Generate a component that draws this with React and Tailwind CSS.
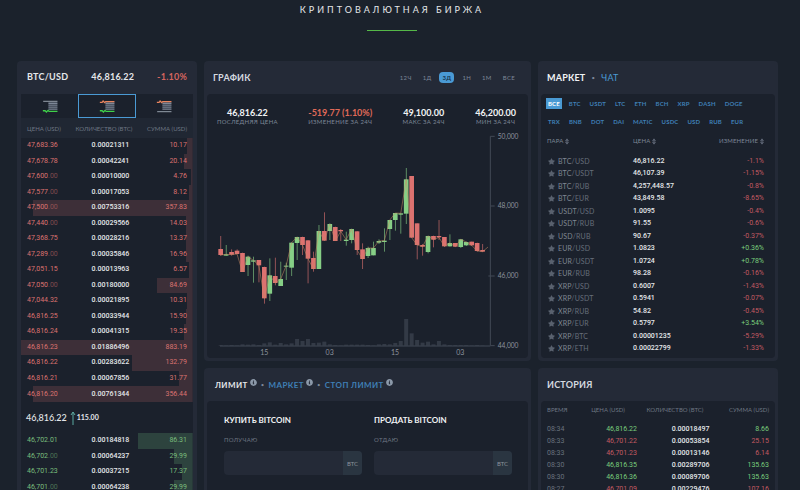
import React, { useState } from 'react';
import { FaStar, FaInfoCircle } from 'react-icons/fa';

const asks = [
    ['47,683', '.36', '0.00021311', '10.17', 3],
    ['47,678', '.78', '0.00042241', '20.14', 5],
    ['47,600', '.00', '0.00010000', '4.76', 1],
    ['47,577', '.00', '0.00017053', '8.12', 2],
    ['47,500', '.00', '0.00753316', '357.83', 93],
    ['47,440', '.00', '0.00029566', '14.03', 4],
    ['47,368', '.75', '0.00028216', '13.37', 4],
    ['47,289', '.00', '0.00035846', '16.96', 4],
    ['47,051', '.15', '0.00013963', '6.57', 2],
    ['47,050', '.00', '0.00180000', '84.69', 21],
    ['47,044', '.32', '0.00021895', '10.31', 3],
    ['46,816', '.25', '0.00033944', '15.90', 4],
    ['46,816', '.24', '0.00041315', '19.35', 5],
    ['46,816', '.23', '0.01886496', '883.19', 100],
    ['46,816', '.22', '0.00283622', '132.79', 35],
    ['46,816', '.21', '0.00067856', '31.77', 8],
    ['46,816', '.20', '0.00761344', '356.44', 93],
];

const bids = [
    ['46,702', '.01', '0.00184818', '86.31', 32],
    ['46,702', '.00', '0.00064237', '29.99', 11],
    ['46,701', '.23', '0.00037215', '17.37', 6],
    ['46,701', '.00', '0.00064238', '29.99', 11],
];

const coins = [
    ['ВСЕ', 'BTC', 'USDT', 'LTC', 'ETH', 'BCH', 'XRP', 'DASH', 'DOGE'],
    ['TRX', 'BNB', 'DOT', 'DAI', 'MATIC', 'USDC', 'USD', 'RUB', 'EUR'],
];

const pairs = [
    ['BTC', 'USD', '46,816.22', '-1.1%'],
    ['BTC', 'USDT', '46,107.39', '-1.15%'],
    ['BTC', 'RUB', '4,257,448.57', '-0.8%'],
    ['BTC', 'EUR', '43,849.58', '-8.65%'],
    ['USDT', 'USD', '1.0095', '-0.4%'],
    ['USDT', 'RUB', '91.55', '-0.6%'],
    ['USD', 'RUB', '90.67', '-0.37%'],
    ['EUR', 'USD', '1.0823', '+0.36%'],
    ['EUR', 'USDT', '1.0724', '+0.78%'],
    ['EUR', 'RUB', '98.28', '-0.16%'],
    ['XRP', 'USD', '0.6007', '-1.43%'],
    ['XRP', 'USDT', '0.5941', '-0.07%'],
    ['XRP', 'RUB', '54.82', '-0.45%'],
    ['XRP', 'EUR', '0.5797', '+3.54%'],
    ['XRP', 'BTC', '0.00001235', '-5.29%'],
    ['XRP', 'ETH', '0.00022799', '-1.33%'],
];

const trades = [
    ['08:34', '46,816.22', '0.00018497', '8.66', true],
    ['08:33', '46,701.22', '0.00053854', '25.15', false],
    ['08:33', '46,701.23', '0.00013146', '6.14', false],
    ['08:30', '46,816.35', '0.00289706', '135.63', true],
    ['08:30', '46,816.36', '0.00089706', '135.63', true],
    ['08:27', '46,701.09', '0.00229476', '107.16', false],
];

// up, high, body top, body bottom, low
const candles = [
    [0, 318, 357, 375, 378], [1, 345, 373, 377, 377], [0, 358, 366, 374, 377], [0, 358, 362, 372, 372],
    [0, 368, 369, 426, 426], [1, 377, 380, 405, 438], [1, 380, 391, 395, 458], [0, 390, 390, 406, 457],
    [0, 410, 411, 505, 521], [1, 385, 436, 491, 513], [0, 383, 438, 459, 466], [1, 395, 447, 468, 468],
    [1, 398, 407, 410, 450], [1, 338, 338, 413, 438], [1, 320, 321, 339, 390], [0, 320, 321, 345, 375],
    [0, 330, 331, 386, 460], [0, 365, 384, 417, 425], [1, 285, 303, 417, 417], [0, 247, 303, 332, 332],
    [1, 280, 282, 303, 330], [0, 290, 291, 333, 333], [0, 297, 300, 304, 333], [1, 305, 329, 333, 347],
    [1, 296, 297, 330, 340], [0, 303, 304, 360, 375], [0, 340, 358, 387, 417], [1, 350, 354, 378, 384],
    [1, 335, 354, 376, 376], [1, 328, 333, 338, 342], [1, 295, 332, 336, 365], [1, 270, 270, 297, 330],
    [1, 249, 249, 270, 302], [1, 250, 250, 254, 311], [1, 114, 148, 251, 282], [0, 138, 138, 323, 323],
    [0, 280, 280, 345, 388], [0, 342, 345, 350, 377], [1, 317, 318, 366, 370], [0, 317, 318, 329, 352],
    [0, 270, 318, 322, 330], [0, 321, 321, 349, 350], [1, 313, 339, 349, 350], [0, 339, 339, 350, 350],
    [1, 327, 328, 351, 354], [1, 335, 336, 346, 348], [0, 335, 335, 346, 348], [0, 338, 339, 363, 365],
    [0, 342, 360, 365, 366],
];

const volumes = [
    2, 1, 2, 1, 4, 3, 4, 2, 7, 10, 3, 8, 4, 7, 20, 14, 20, 8, 9, 12, 4, 2, 1, 3, 3, 3, 3, 2, 1, 4, 5, 4, 8, 14, 80, 37, 17,
    9, 12, 4, 14, 4, 2, 2, 2, 2, 1, 2, 1,
];

const candleX = (i) => 41 + i * 16.37;

function Chart() {
    const closes = candles.map((c, i) => `${candleX(i)},${c[0] ? c[2] : c[3]}`).join(' ');

    return (
        <svg viewBox="0 0 963 684" className="block w-full" role="img" aria-label="График BTC/USD">
            {volumes.map((v, i) => (
                <rect key={i} x={candleX(i) - 6} y={647 - v} width="12" height={v} fill="#333a46" />
            ))}
            <path d="M39 648H850M863 19H850V647H863M850 228H863M844 438H863" fill="none" stroke="#434a56" strokeWidth="3" />
            {candles.map(([up, high, top, bottom, low], i) => (
                <g key={i} fill={up ? '#86cf86' : '#dc7270'}>
                    <rect x={candleX(i) - 1} y={high} width="2.5" height={low - high} opacity="0.75" />
                    <rect x={candleX(i) - 7} y={top} width="14" height={bottom - top} />
                </g>
            ))}
            <polyline points={`${closes} 843,351`} fill="none" stroke="#c98a62" strokeWidth="2" opacity="0.8" />
            <g fill="#8b929c" fontSize="20">
                <text x="872" y="26">50,000</text>
                <text x="872" y="235">48,000</text>
                <text x="872" y="445">46,000</text>
                <text x="872" y="654">44,000</text>
                <g textAnchor="middle" fontSize="21">
                    <text x="172" y="676">15</text>
                    <text x="368" y="676">03</text>
                    <text x="564" y="676">15</text>
                    <text x="760" y="676">03</text>
                </g>
            </g>
        </svg>
    );
}

// icon of the order book view: buy / sell / both
function BookIcon({ type }) {
    return (
        <svg viewBox="0 0 48 40" className="w-4 h-[13px]">
            <path d="M19 10H47M19 16H47M19 22H47M19 28H47" stroke="#7d8797" strokeWidth="4" />
            {type === 'buy' && <path d="M3 4H47" stroke="#9aa3b0" strokeWidth="3" />}
            {type !== 'buy' && <path d="M2 7H9L12 3L17 8L20 5H47" fill="none" stroke="#e8855f" strokeWidth="4" />}
            {type !== 'sell' && <path d="M2 33H9L13 37L18 32L21 35H47" fill="none" stroke="#3fd04a" strokeWidth="4" />}
            {type === 'sell' && <path d="M3 36H47" stroke="#9aa3b0" strokeWidth="3" />}
        </svg>
    );
}

function SortIcon() {
    return (
        <svg viewBox="0 0 6 10" className="inline w-1 h-[7px] ml-0.5 align-middle">
            <path d="M1 4L3 1L5 4ZM1 6L3 9L5 6Z" fill="none" stroke="#7d8797" />
        </svg>
    );
}

function BookRows({ rows, color, bar }) {
    return (
        <tbody>
            {rows.map((r, i) => (
                <tr key={i} style={{ background: `linear-gradient(to left, ${bar} ${r[4]}%, transparent ${r[4]}%)` }}>
                    <td className={`p-0 pl-[6px] w-[33%] ${color}`}>
                        {r[0]}
                        <span className={r[1] === '.00' ? 'opacity-50' : ''}>{r[1]}</span>
                    </td>
                    <td className="p-0 w-[30%] text-right text-[#e4e7ea] font-medium">{r[2]}</td>
                    <td className={`p-0 pr-[6px] text-right ${color}`}>{r[3]}</td>
                </tr>
            ))}
        </tbody>
    );
}

function Panel({ header, children }) {
    return (
        <section className="bg-[#242a37] rounded px-[3px] pb-[3px]">
            <div className="h-[33px] flex items-center px-[6px]">{header}</div>
            <div className="bg-[#1b212c] rounded-sm">{children}</div>
        </section>
    );
}

function OrderBook() {
    const [view, setView] = useState('both');

    return (
        <section className="bg-[#242a37] rounded px-1">
            <div className="h-8 flex items-center justify-between px-[6px] text-[9px] font-bold tracking-wide text-[#e4e7ea]">
                <h2>BTC/USD</h2>
                <span>46,816.22</span>
                <span className="text-[#d5655f]">-1.10%</span>
            </div>
            <div className="bg-[#1b212c]">
                <div className="grid grid-cols-3 bg-[#242a37] pt-px">
                    {['buy', 'both', 'sell'].map((t) => (
                        <button
                            key={t}
                            onClick={() => setView(t)}
                            aria-label={t}
                            className={`h-6 flex items-center justify-center bg-[#1b212c] border ${view === t ? 'border-[#4a9ad4]' : 'border-transparent'}`}
                        >
                            <BookIcon type={t} />
                        </button>
                    ))}
                </div>
                <div className="h-5 px-[6px] flex items-center justify-between bg-[#202733] text-[6px] text-[#6d7683]">
                    <span>ЦЕНА (USD)</span>
                    <span>КОЛИЧЕСТВО (BTC)</span>
                    <span>СУММА (USD)</span>
                </div>
                <table className="w-full h-[264px] table-fixed text-[7px] leading-none font-[Roboto,sans-serif]">
                    <BookRows rows={asks} color="text-[#dc7270]" bar="#3d2f38" />
                </table>
                <div className="h-[31px] px-[5px] flex items-center text-[9px] font-medium text-[#e4e7ea]">
                    46,816.22
                    <svg viewBox="0 0 6 14" className="w-[6px] h-[14px] ml-[3px]">
                        <path d="M3 14V1M1 4L3 1L5 4" fill="none" stroke="#5aa9a0" />
                    </svg>
                    <span className="ml-px text-[7px] font-bold">115.00</span>
                </div>
                <table className="w-full h-[62px] table-fixed text-[7px] leading-none font-[Roboto,sans-serif]">
                    <BookRows rows={bids} color="text-[#79bd7c]" bar="#2d433e" />
                </table>
            </div>
        </section>
    );
}

function Stat({ value, label, color = '' }) {
    return (
        <div>
            <div className={color}>{value}</div>
            <div className="text-[6px] leading-[8px] font-normal tracking-wider text-[#7d8797]">{label}</div>
        </div>
    );
}

function ChartPanel() {
    const [range, setRange] = useState('3Д');

    return (
        <Panel
            header={
                <>
                    <h2 className="text-[9px] font-bold text-[#d5dae0] tracking-wide">ГРАФИК</h2>
                    <div className="ml-auto mr-1 flex items-center gap-[5px] text-[6px] tracking-wider">
                        {['12Ч', '1Д', '3Д', '1Н', '1М', 'ВСЕ'].map((r) => (
                            <button
                                key={r}
                                onClick={() => setRange(r)}
                                className={`h-[11px] px-[3px] rounded-sm ${range === r ? 'bg-[#4a9ad4] text-[#16324a] font-bold' : 'text-[#7d8797]'}`}
                            >
                                {r}
                            </button>
                        ))}
                    </div>
                </>
            }
        >
            <div className="flex justify-between pl-[10px] pr-3 pt-[13px] text-center text-[9px] leading-[11px] font-bold text-[#f1f3f5]">
                <Stat value="46,816.22" label="ПОСЛЕДНЯЯ ЦЕНА" />
                <Stat value="-519.77 (1.10%)" label="ИЗМЕНЕНИЕ ЗА 24Ч" color="text-[#e06a58]" />
                <Stat value="49,100.00" label="МАКС ЗА 24Ч" />
                <Stat value="46,200.00" label="МИН ЗА 24Ч" />
            </div>
            <div className="mt-1">
                <Chart />
            </div>
        </Panel>
    );
}

function OrderField({ id, title, label }) {
    return (
        <div className="flex-1 min-w-0">
            <h3 className="text-[8px] leading-3 font-bold text-[#f1f3f5]">{title}</h3>
            <label htmlFor={id} className="block mt-[9px] text-[6px] leading-[10px] tracking-wider text-[#6d7683]">{label}</label>
            <div className="mt-[6px] h-6 flex rounded-sm overflow-hidden bg-[#242a37]">
                <input id={id} type="text" className="flex-1 min-w-0 px-2 text-[8px] text-white outline-none" />
                <span className="w-[19px] flex items-center justify-center bg-[#2a3541] text-[6px] text-[#8b929c]">BTC</span>
            </div>
        </div>
    );
}

function OrderForm() {
    const [type, setType] = useState('ЛИМИТ');

    return (
        <Panel
            header={
                <div className="pl-[2px] flex items-center gap-1 text-[8px] tracking-wider">
                    {['ЛИМИТ', 'МАРКЕТ', 'СТОП ЛИМИТ'].map((t, i) => (
                        <React.Fragment key={t}>
                            {i > 0 && <span className="text-[6px] text-[#7d8797]">•</span>}
                            <button
                                onClick={() => setType(t)}
                                className={`flex items-start font-bold ${type === t ? 'text-[#e4e7ea]' : 'text-[#3f7fb5]'}`}
                            >
                                {t}
                                <FaInfoCircle className="size-[7px] ml-[2px] mb-1 text-[#8b98a8]" />
                            </button>
                        </React.Fragment>
                    ))}
                </div>
            }
        >
            <div className="flex gap-3 pl-[17px] pr-4 pt-[13px] pb-6">
                <OrderField id="buy" title="КУПИТЬ BITCOIN" label="ПОЛУЧАЮ" />
                <OrderField id="sell" title="ПРОДАТЬ BITCOIN" label="ОТДАЮ" />
            </div>
        </Panel>
    );
}

function Market() {
    const [coin, setCoin] = useState('ВСЕ');

    return (
        <Panel
            header={
                <div className="flex items-center gap-[6px] text-[9px] tracking-wide">
                    <h2 className="font-bold text-[#f1f3f5]">МАРКЕТ</h2>
                    <span className="text-[6px] text-[#7d8797]">•</span>
                    <a href="#chat" className="text-[#4a9ad4]">ЧАТ</a>
                </div>
            }
        >
            <div className="pl-[5px] pt-1 pb-[3px]">
                {coins.map((row, i) => (
                    <div key={i} className="flex gap-[5px] mb-[7px] text-[6px] tracking-wide">
                        {row.map((c) => (
                            <button
                                key={c}
                                onClick={() => setCoin(c)}
                                className={`h-[11px] px-[2px] font-bold ${coin === c ? 'bg-[#4a9ad4] text-white' : 'text-[#3f7fb5]'}`}
                            >
                                {c}
                            </button>
                        ))}
                    </div>
                ))}
                <table className="w-full h-[221px] text-[7px] leading-none font-[Roboto,sans-serif]">
                    <thead>
                        <tr className="h-[21px] text-[6px] tracking-wide text-[#7d8797] text-left font-[Lato,sans-serif]">
                            <th className="p-0 pl-px pb-[6px] font-normal w-[87px]">ПАРА<SortIcon /></th>
                            <th className="p-0 pb-[6px] font-normal">ЦЕНА<SortIcon /></th>
                            <th className="p-0 pb-[6px] pr-[11px] font-normal text-right">ИЗМЕНЕНИЕ<SortIcon /></th>
                        </tr>
                    </thead>
                    <tbody>
                        {pairs.map(([base, quote, price, change]) => (
                            <tr key={base + quote}>
                                <td className="p-0 pl-[2px] font-[Lato,sans-serif] tracking-wide text-[#666e7a]">
                                    <FaStar className="inline size-[7px] mr-[3px] align-text-bottom text-[#59616e]" />
                                    <span className="text-[#7f8792]">{base}</span>/{quote}
                                </td>
                                <td className="p-0 font-medium text-[#e4e7ea]">{price}</td>
                                <td className={`p-0 pr-[11px] text-right ${change[0] === '+' ? 'text-[#79cd7c]' : 'text-[#c25a62]'}`}>{change}</td>
                            </tr>
                        ))}
                    </tbody>
                </table>
            </div>
        </Panel>
    );
}

function History() {
    return (
        <Panel header={<h2 className="text-[9px] font-bold tracking-wide text-[#d5dae0]">ИСТОРИЯ</h2>}>
            <table className="w-full table-fixed text-[7px] leading-none text-right font-[Roboto,sans-serif]">
                <thead>
                    <tr className="h-[22px] text-[6px] text-[#6d7683] font-[Lato,sans-serif]">
                        <th className="p-0 pl-[6px] pb-1 font-normal text-left w-[15%]">ВРЕМЯ</th>
                        <th className="p-0 pb-1 pr-3 font-normal w-[26%]">ЦЕНА (USD)</th>
                        <th className="p-0 pb-1 pr-[6px] font-normal w-[31%]">КОЛИЧЕСТВО (BTC)</th>
                        <th className="p-0 pb-1 pr-[6px] font-normal">СУММА (USD)</th>
                    </tr>
                </thead>
                <tbody>
                    {trades.map(([time, price, amount, sum, up], i) => (
                        <tr key={i} className={`h-3 ${up ? 'text-[#79cd7c]' : 'text-[#c25a62]'}`}>
                            <td className="p-0 pl-[6px] text-left text-[#69717e]">{time}</td>
                            <td className="p-0">{price}</td>
                            <td className="p-0 font-medium text-[#e4e7ea]">{amount}</td>
                            <td className="p-0 pr-[6px]">{sum}</td>
                        </tr>
                    ))}
                </tbody>
            </table>
        </Panel>
    );
}

function App() {
    return (
        <div className="h-screen overflow-hidden bg-[#1b222c] font-[Lato,sans-serif]">
            <header className="h-[61px] pt-1 flex flex-col items-center">
                <h1 className="text-[9px] leading-3 tracking-[3px] text-[#e4e7ea] pr-4">КРИПТОВАЛЮТНАЯ БИРЖА</h1>
                <div className="w-[50px] h-px mt-[14px] mr-4 bg-[#55b848]" />
            </header>
            <main className="pl-[17px] pr-[22px] grid grid-cols-[180fr_327fr_240fr] gap-[7px] items-start">
                <OrderBook />
                <div className="flex flex-col gap-[7px]">
                    <ChartPanel />
                    <OrderForm />
                </div>
                <div className="flex flex-col gap-[7px]">
                    <Market />
                    <History />
                </div>
            </main>
        </div>
    );
}

export default App;
